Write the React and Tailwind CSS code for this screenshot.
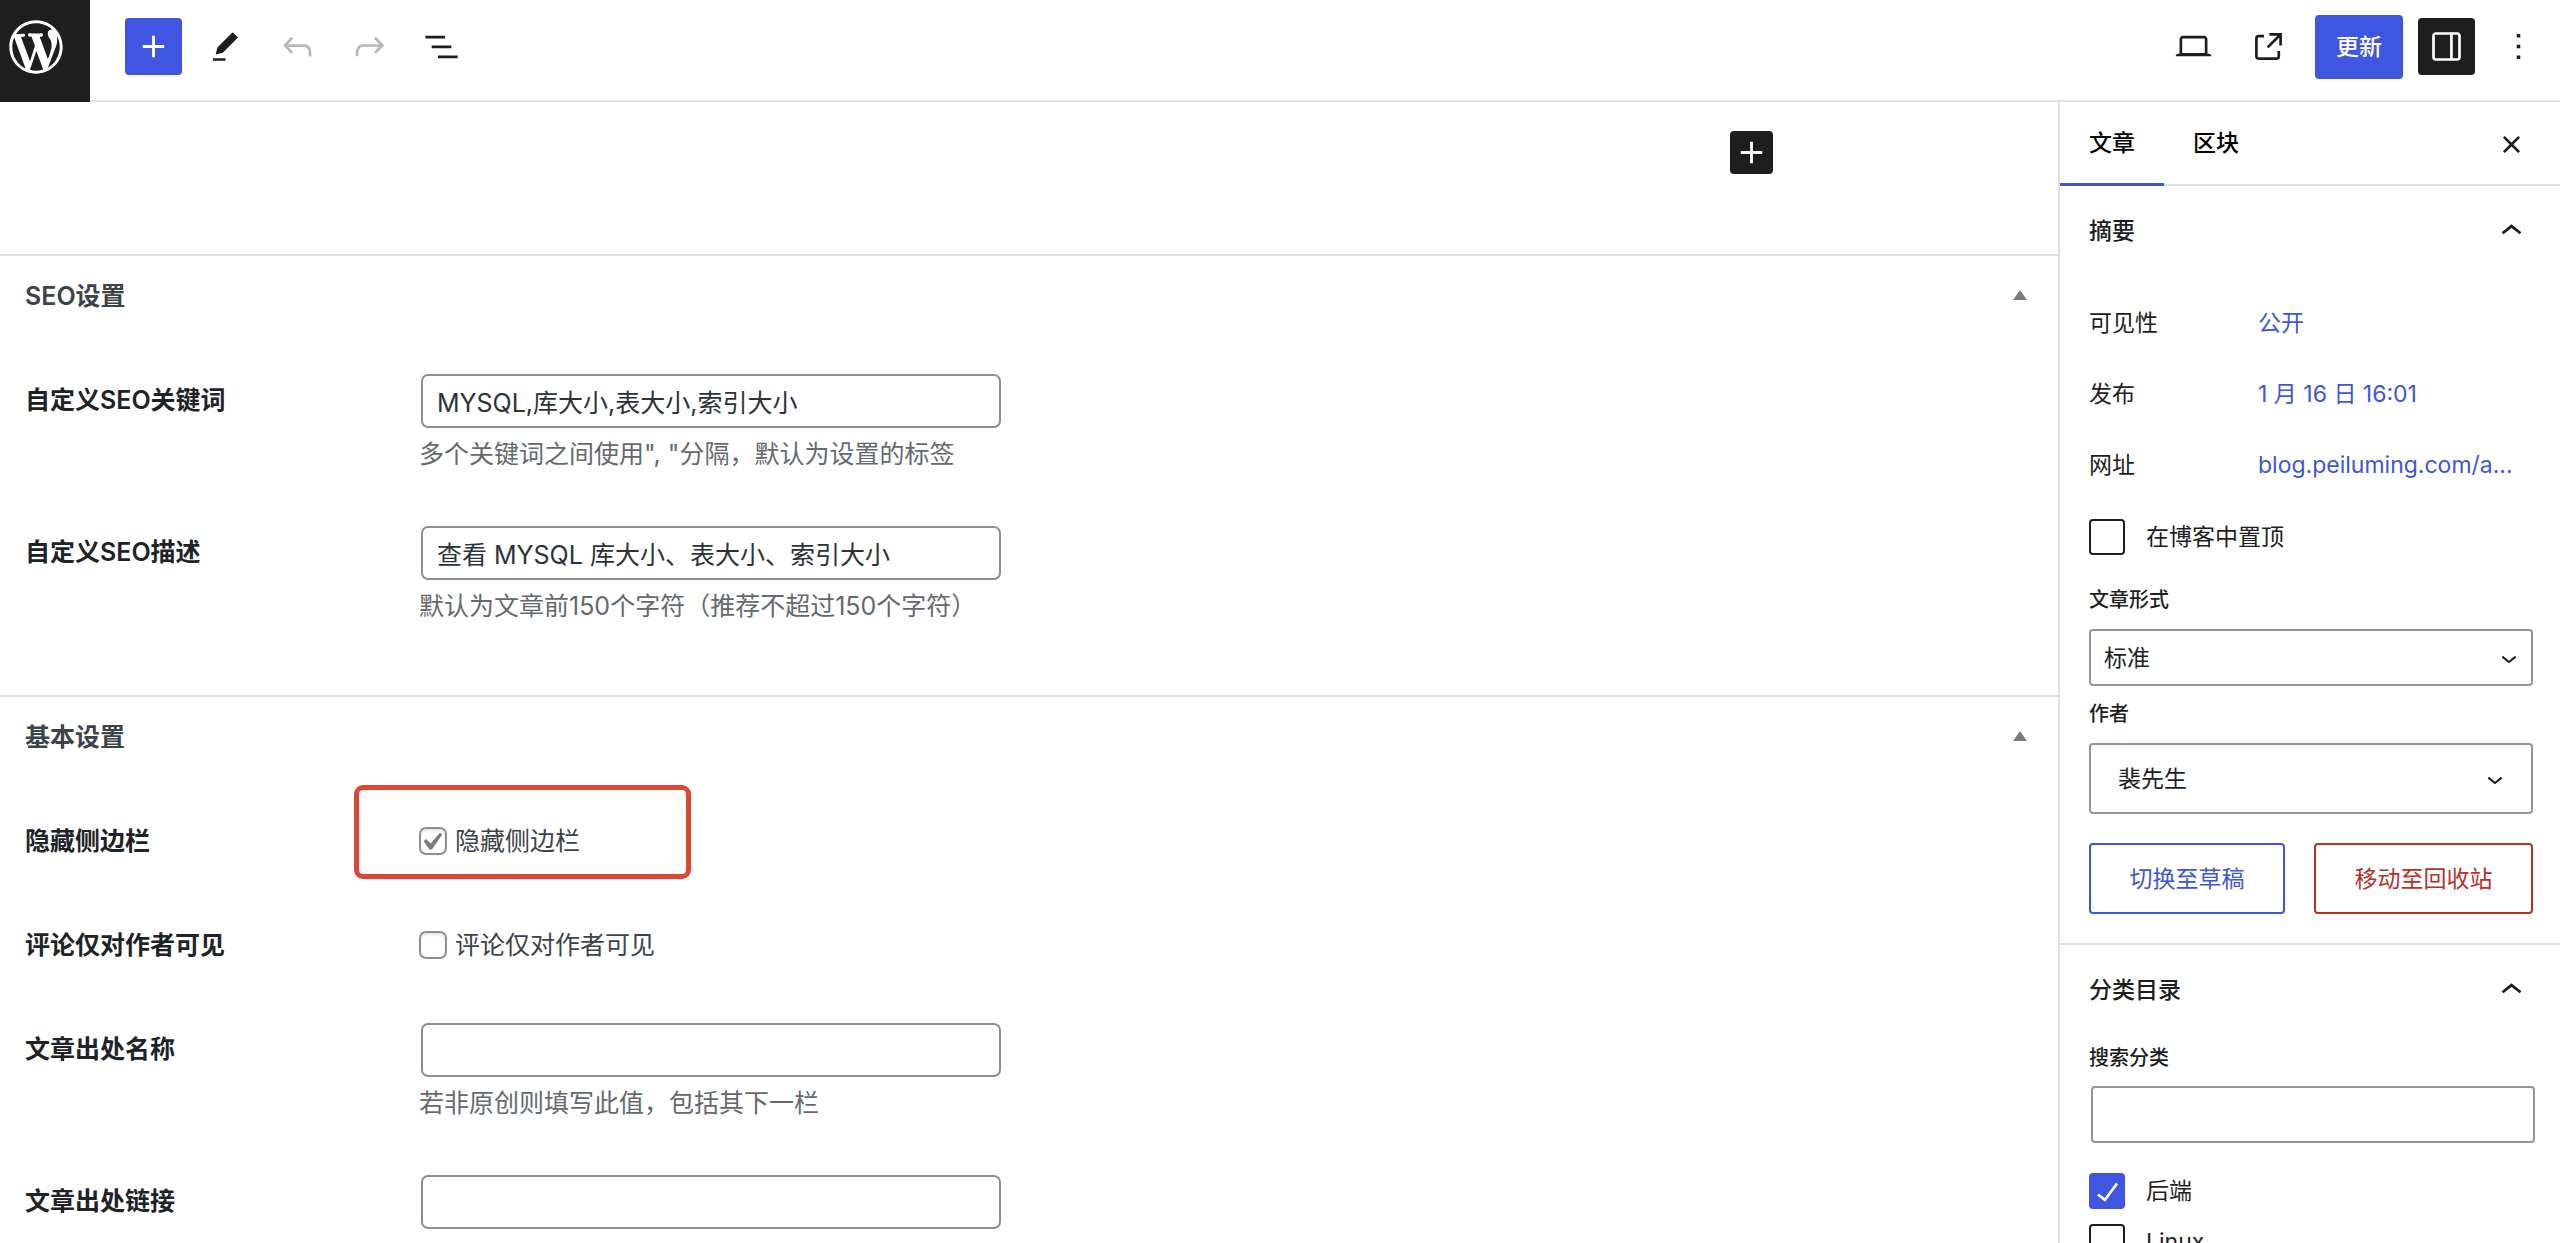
import React from "react";

const PATHS = {
  wordpress:
    "M20 10c0-5.51-4.49-10-10-10C4.48 0 0 4.49 0 10c0 5.52 4.48 10 10 10 5.51 0 10-4.48 10-10zM7.78 15.37L4.37 6.22c.55-.02 1.17-.08 1.17-.08.5-.06.44-1.13-.06-1.11 0 0-1.45.11-2.37.11-.18 0-.37 0-.58-.01C4.12 2.69 6.87 1.11 10 1.11c2.33 0 4.45.87 6.05 2.34-.68-.11-1.65.39-1.65 1.58 0 .74.45 1.36.9 2.1.35.61.55 1.36.55 2.46 0 1.49-1.4 5-1.4 5l-3.03-8.37c.54-.02.82-.17.82-.17.5-.05.44-1.25-.06-1.22 0 0-1.44.12-2.38.12-.87 0-2.33-.12-2.33-.12-.5-.03-.56 1.2-.06 1.22l.92.08 1.26 3.41zM17.41 10c.24-.64.74-1.87.43-4.25.7 1.29 1.05 2.71 1.05 4.25 0 3.29-1.73 6.24-4.4 7.78.97-2.59 1.94-5.2 2.92-7.78zM6.1 18.09C3.12 16.65 1.11 13.53 1.11 10c0-1.3.23-2.48.72-3.59C3.25 10.3 4.67 14.2 6.1 18.09zm4.03-6.63l2.58 6.98c-.86.29-1.76.45-2.71.45-.79 0-1.57-.11-2.29-.33.81-2.38 1.62-4.74 2.42-7.1z",
  plus: "M18 11.2h-5.2V6h-1.6v5.2H6v1.6h5.2V18h1.6v-5.2H18z",
  edit: "m19 7-3-3-8.5 8.5-1 4 4-1L19 7Zm-7 11.5H5V20h7v-1.5Z",
  undo: "M18.3 11.7c-.6-.6-1.4-.9-2.3-.9H6.7l2.9-3.3-1.1-1-4.5 5L8.5 16l1-1-2.7-2.7H16c.5 0 .9.2 1.3.5 1 1 1 3.4 1 4.5v.3h1.5v-.2c0-1.5 0-4.3-1.5-5.7z",
  redo: "M15.6 6.5l-1.1 1 2.9 3.3H8c-.9 0-1.7.3-2.3.9-1.4 1.5-1.4 4.2-1.4 5.6v.2h1.5v-.3c0-1.1 0-3.5 1-4.5.3-.3.7-.5 1.3-.5h9.2L14.5 15l1.1 1.1 4.6-4.6-4.6-5z",
  list: "M3 6h11v1.5H3V6Zm3.5 5.5h11V13h-11v-1.5ZM21 17H10v1.5h11V17Z",
  desktop:
    "M20.5 16h-.7V8c0-1.1-.9-2-2-2H6.2c-1.1 0-2 .9-2 2v8h-.7c-.8 0-1.5.7-1.5 1.5h20c0-.8-.7-1.5-1.5-1.5zM5.7 8c0-.3.2-.5.5-.5h11.6c.3 0 .5.2.5.5v7.6H5.7V8z",
  external:
    "M19.5 4.5h-7V6h4.44l-5.97 5.97 1.06 1.06L18 7.06v4.44h1.5v-7Zm-13 1a2 2 0 0 0-2 2v10a2 2 0 0 0 2 2h10a2 2 0 0 0 2-2v-3H17v3a.5.5 0 0 1-.5.5h-10a.5.5 0 0 1-.5-.5v-10a.5.5 0 0 1 .5-.5h3V5.5h-3Z",
  drawer:
    "M18 4H6c-1.1 0-2 .9-2 2v12c0 1.1.9 2 2 2h12c1.1 0 2-.9 2-2V6c0-1.1-.9-2-2-2zm-4 14.5H6c-.3 0-.5-.2-.5-.5V6c0-.3.2-.5.5-.5h8v13zm4.5-.5c0 .3-.2.5-.5.5h-2.5v-13H18c.3 0 .5.2.5.5v12z",
  more: "M13 19h-2v-2h2v2zm0-6h-2v-2h2v2zm0-6h-2V5h2v2z",
  close:
    "M12 13.06l3.712 3.713 1.061-1.06L13.061 12l3.712-3.712-1.06-1.06L12 10.938 8.288 7.227l-1.061 1.06L10.939 12l-3.712 3.712 1.06 1.061L12 13.061z",
  up: "M6.5 12.4L12 8l5.5 4.4-.9 1.2L12 10l-4.5 3.6-1-1.2z",
  down: "M17.5 11.6L12 16l-5.5-4.4.9-1.2L12 14l4.5-3.6 1 1.2z",
  check: "M16.7 7.1l-6.3 8.5-3.3-2.5-.9 1.2 4.5 3.4L17.9 8z",
  yes: "M14.83 4.89l1.34.94-5.81 8.38H9.02L5.78 9.67l1.34-1.25 2.57 2.4z",
};

function Icon({ name, className = "size-[43px]", viewBox = "0 0 24 24" }) {
  return (
    <svg viewBox={viewBox} className={`shrink-0 fill-current ${className}`} aria-hidden="true">
      <path d={PATHS[name]} />
    </svg>
  );
}

function ToolButton({ icon, label, className = "", disabled = false }) {
  return (
    <button
      type="button"
      aria-label={label}
      disabled={disabled}
      className={`flex size-[57px] items-center justify-center rounded-sm ${className}`}
    >
      <Icon name={icon} />
    </button>
  );
}

function Header() {
  return (
    <header className="flex h-[102px] shrink-0">
      <a href="#posts" aria-label="查看文章" className="w-[90px] bg-[#1e1e1e] pt-[15px] pl-1 text-white">
        <Icon name="wordpress" viewBox="-2 -2 24 24" className="size-16" />
      </a>
      <div className="flex flex-1 items-center justify-between border-b-2 border-[#e0e0e0] pr-[13px] pb-[7px] pl-[35px]">
        <div className="flex gap-[15px]">
          <ToolButton icon="plus" label="切换区块插入器" className="bg-[#4056e1] text-white" />
          <ToolButton icon="edit" label="工具" />
          <ToolButton icon="undo" label="撤销" disabled className="text-[#b8b8b8]" />
          <ToolButton icon="redo" label="重做" disabled className="text-[#b8b8b8]" />
          <ToolButton icon="list" label="文档概览" />
        </div>
        <div className="flex items-center gap-[18px]">
          <ToolButton icon="desktop" label="预览" />
          <ToolButton icon="external" label="查看文章" />
          <div className="flex items-center gap-[15px]">
            <button type="button" className="h-16 rounded-sm bg-[#4056e1] px-[21px] font-medium text-white">
              更新
            </button>
            <ToolButton icon="drawer" label="设置" className="bg-[#1e1e1e] text-white" />
            <ToolButton icon="more" label="选项" />
          </div>
        </div>
      </div>
    </header>
  );
}

function MetaSection({ title, children }) {
  return (
    <section className="border-t-2 border-[#e0e0e0] pb-[53px]">
      <div className="flex h-[82px] items-start justify-between pt-[22px] pr-[31px] pl-[25px]">
        <h2 className="font-semibold text-[#3c434a]">{title}</h2>
        <button type="button" aria-label={`切换面板：${title}`} className="pt-3 text-[#787c82]">
          <svg viewBox="0 0 14 10" className="h-[10px] w-[14px] fill-current" aria-hidden="true">
            <path d="M7 0l7 10H0z" />
          </svg>
        </button>
      </div>
      {children}
    </section>
  );
}

function TextRow({ id, label, value, hint }) {
  return (
    <div className="flex h-[152px] items-start pt-9 pl-[25px]">
      <label htmlFor={id} className="w-[394px] shrink-0 pt-2 font-semibold text-[#1d2327]">
        {label}
      </label>
      <div className="flex flex-col">
        <input
          id={id}
          type="text"
          defaultValue={value}
          className="mx-[2px] h-[54px] w-[580px] rounded-[7px] border-2 border-[#8c8f94] bg-white px-[14px] text-[#2c3338]"
        />
        {hint && <p className="mt-2 text-[#646970]">{hint}</p>}
      </div>
    </div>
  );
}

function CheckRow({ id, label, checked, marked }) {
  return (
    <div className="flex h-[104px] items-start pt-11 pl-[25px]">
      <span className="w-[394px] shrink-0 font-semibold text-[#1d2327]">{label}</span>
      <div className="relative flex items-center gap-2">
        <span className="relative flex size-7">
          <input
            id={id}
            type="checkbox"
            defaultChecked={checked}
            className="peer size-7 appearance-none rounded-[7px] border-2 border-[#8c8f94] bg-white shadow-[inset_0_2px_3px_rgba(0,0,0,0.1)]"
          />
          <span className="pointer-events-none absolute inset-0 hidden items-center justify-center text-[#787c82] peer-checked:flex">
            <Icon name="yes" viewBox="1 0 20 19" className="size-9" />
          </span>
        </span>
        <label htmlFor={id} className="text-[#3c434a]">
          {label}
        </label>
        {marked && (
          <span className="pointer-events-none absolute -top-[38px] -left-[65px] h-[94px] w-[337px] rounded-[9px] border-[5px] border-[#dd4630]" />
        )}
      </div>
    </div>
  );
}

function Editor() {
  return (
    <main className="flex-1 overflow-hidden text-[25px] leading-9">
      <div className="mx-auto flex h-[152px] w-full max-w-[1488px] items-start justify-end pt-[29px]">
        <button
          type="button"
          aria-label="添加区块"
          className="flex size-[43px] items-center justify-center rounded-sm bg-[#1e1e1e] text-white"
        >
          <Icon name="plus" />
        </button>
      </div>
      <MetaSection title="SEO设置">
        <TextRow
          id="seo-keywords"
          label="自定义SEO关键词"
          value="MYSQL,库大小,表大小,索引大小"
          hint={'多个关键词之间使用", "分隔，默认为设置的标签'}
        />
        <TextRow
          id="seo-description"
          label="自定义SEO描述"
          value="查看 MYSQL 库大小、表大小、索引大小"
          hint="默认为文章前150个字符（推荐不超过150个字符）"
        />
      </MetaSection>
      <MetaSection title="基本设置">
        <CheckRow id="hide-sidebar" label="隐藏侧边栏" checked marked />
        <CheckRow id="author-only" label="评论仅对作者可见" />
        <TextRow id="source-name" label="文章出处名称" hint="若非原创则填写此值，包括其下一栏" />
        <TextRow id="source-link" label="文章出处链接" />
      </MetaSection>
    </main>
  );
}

function PanelTitle({ children }) {
  return (
    <h2>
      <button type="button" className="flex h-[90px] w-full items-center justify-between pr-[27px] pl-[29px] font-medium">
        {children}
        <Icon name="up" />
      </button>
    </h2>
  );
}

function SummaryRow({ label, value }) {
  return (
    <div className="flex h-[71px] items-center">
      <span className="w-[169px] shrink-0">{label}</span>
      <button type="button" className="truncate text-[#4056d9]">
        {value}
      </button>
    </div>
  );
}

function SideCheck({ id, label, checked }) {
  return (
    <div className="flex h-9 items-center gap-[21px]">
      <span className="relative flex size-9">
        <input
          id={id}
          type="checkbox"
          defaultChecked={checked}
          className="peer size-9 appearance-none rounded-sm border-2 border-[#1e1e1e] bg-white checked:border-[#4056e1] checked:bg-[#4056e1]"
        />
        <span className="pointer-events-none absolute inset-0 hidden items-center justify-center text-white peer-checked:flex">
          <Icon name="check" />
        </span>
      </span>
      <label htmlFor={id}>{label}</label>
    </div>
  );
}

function SideSelect({ id, label, value, className, iconClassName }) {
  return (
    <>
      <label htmlFor={id} className="text-[20px] font-medium">
        {label}
      </label>
      <div className="relative mt-[13px]">
        <select
          id={id}
          className={`w-full appearance-none rounded-sm border-2 border-[#949494] bg-white ${className}`}
        >
          <option>{value}</option>
        </select>
        <span className={`pointer-events-none absolute inset-y-0 flex items-center ${iconClassName}`}>
          <Icon name="down" className="size-8" />
        </span>
      </div>
    </>
  );
}

function Sidebar() {
  return (
    <aside className="w-[502px] shrink-0 overflow-hidden border-l-2 border-[#e0e0e0]">
      <div className="flex h-[84px] items-center justify-between pr-[27px] shadow-[inset_0_-2px_0_#e0e0e0]">
        <div className="flex h-full font-medium text-black">
          <button type="button" className="border-b-[3px] border-[#4056d0] px-[29px]">
            文章
          </button>
          <button type="button" className="border-b-[3px] border-transparent px-[29px]">
            区块
          </button>
        </div>
        <button type="button" aria-label="关闭设置">
          <Icon name="close" />
        </button>
      </div>

      <section className="pb-[29px]">
        <PanelTitle>摘要</PanelTitle>
        <div className="flex flex-col pt-[11px] pr-[27px] pl-[29px]">
          <SummaryRow label="可见性" value="公开" />
          <SummaryRow label="发布" value="1 月 16 日 16:01" />
          <SummaryRow label="网址" value="blog.peiluming.com/a..." />
          <div className="mt-[19px] mb-[29px]">
            <SideCheck id="sticky" label="在博客中置顶" />
          </div>
          <SideSelect id="format" label="文章形式" value="标准" className="h-[57px] px-[13px]" iconClassName="right-2" />
          <div className="mt-3 flex flex-col">
            <SideSelect id="author" label="作者" value="裴先生" className="h-[71px] px-[27px]" iconClassName="right-[22px]" />
          </div>
          <div className="mt-[29px] flex gap-[29px]">
            <button type="button" className="h-[71px] flex-auto rounded-sm border-2 border-[#4056d9] text-[#4056d9]">
              切换至草稿
            </button>
            <button type="button" className="h-[71px] flex-auto rounded-sm border-2 border-[#b8302a] text-[#b8302a]">
              移动至回收站
            </button>
          </div>
        </div>
      </section>

      <section className="border-t-2 border-[#e0e0e0]">
        <PanelTitle>分类目录</PanelTitle>
        <div className="flex flex-col pt-[7px] pr-[25px] pl-[29px]">
          <label htmlFor="search-category" className="text-[20px] font-medium">
            搜索分类
          </label>
          <input
            id="search-category"
            type="text"
            className="mt-3 mb-[30px] ml-[2px] h-[57px] rounded-sm border-2 border-[#949494] bg-white px-[13px]"
          />
          <div className="flex flex-col gap-[15px]">
            <SideCheck id="cat-backend" label="后端" checked />
            <SideCheck id="cat-linux" label="Linux" />
          </div>
        </div>
      </section>
    </aside>
  );
}

export default function App() {
  return (
    <div className="flex h-screen flex-col overflow-hidden bg-white font-['Inter','Noto_Sans_CJK_SC',sans-serif] text-[23px] leading-8 text-[#1e1e1e]">
      <Header />
      <div className="flex min-h-0 flex-1">
        <Editor />
        <Sidebar />
      </div>
    </div>
  );
}
